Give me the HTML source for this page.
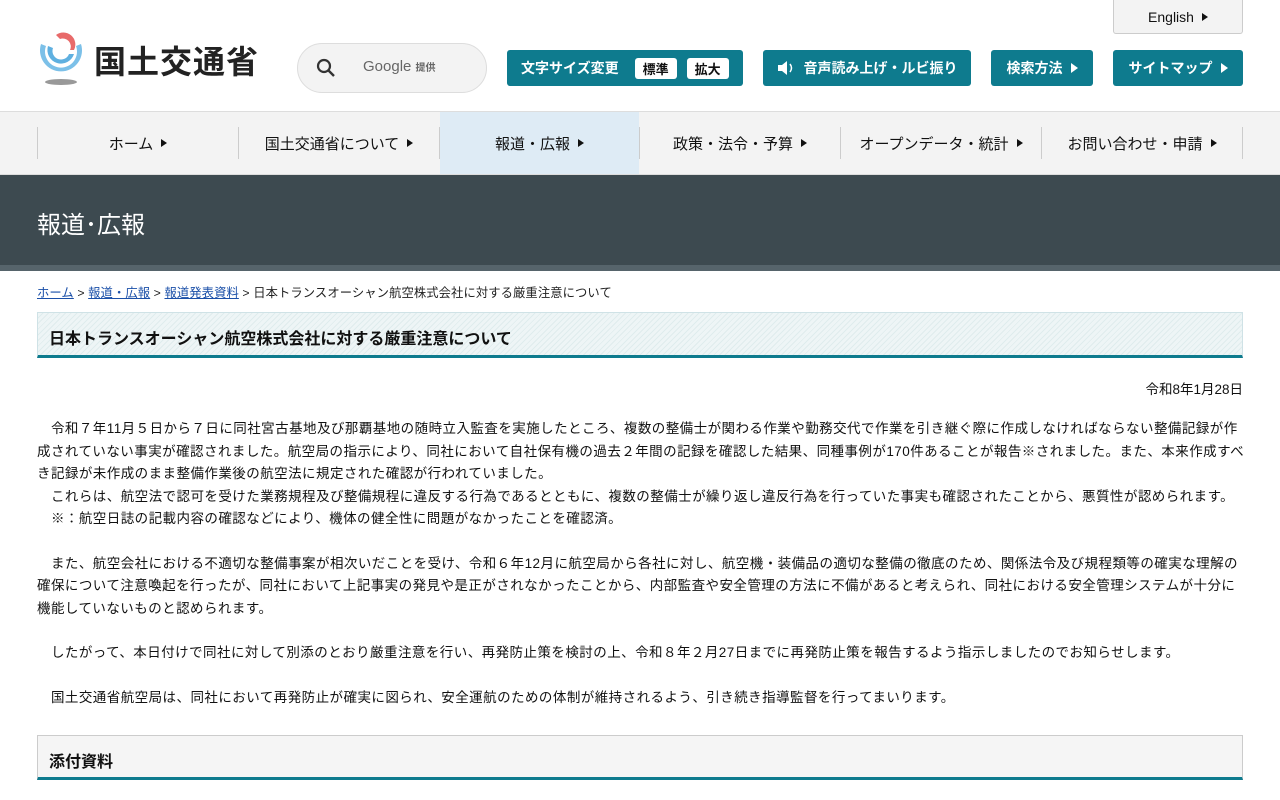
<!DOCTYPE html>
<html lang="ja"><head><meta charset="utf-8">
<style>
*{margin:0;padding:0;box-sizing:border-box}
body{width:1280px;height:800px;overflow:hidden;background:#fff;font-family:"Liberation Sans","Noto Sans CJK JP",sans-serif;color:#111}
.abs{position:absolute}
.btn{position:absolute;top:50px;height:36px;background:#0e7b8e;color:#fff;border-radius:3px;font-size:14px;font-weight:bold;display:flex;align-items:center;justify-content:center}
.tri{display:inline-block;width:0;height:0;border-left:7px solid currentColor;border-top:5px solid transparent;border-bottom:5px solid transparent;margin-left:8px}
.nav{position:absolute;top:111px;left:0;width:1280px;height:64px;background:#f3f3f3;border-top:1px solid #ddd;border-bottom:1px solid #ddd}
.nav div{position:absolute;top:0;height:62px;display:flex;align-items:center;justify-content:center;font-size:15px}
.sep{position:absolute;top:15px;width:1px;height:32px;background:#ccc}
.nav .tri{border-left-width:6px;border-top-width:4px;border-bottom-width:4px}
p{font-size:13.5px;line-height:22.5px;letter-spacing:0.45px}
</style></head><body>
<svg class="abs" style="left:36px;top:32px" width="50" height="54" viewBox="0 0 50 54">
<path d="M5 12 A21 21 0 1 0 45 12 L40 14 A16 16 0 1 1 10 14 Z" fill="#7cc0e8"/>
<path d="M12 14 A13.5 13.5 0 1 0 38 22 L33 22 A8.5 8.5 0 1 1 17 16 Z" fill="#5fb0e0"/>
<path d="M20 3 A12 12 0 0 1 38 18 L34 18 A8 8 0 0 0 24 7 Z" fill="#e86a6a"/>
<ellipse cx="25" cy="50" rx="16" ry="3" fill="#999"/>
</svg>
<div class="abs" style="left:94px;top:37px;font-size:32px;font-weight:bold;color:#222;letter-spacing:1px">国土交通省</div>
<div class="abs" style="left:297px;top:43px;width:190px;height:50px;border:1px solid #ddd;border-radius:25px;background:#f3f3f3"></div>
<svg class="abs" style="left:316px;top:58px" width="20" height="20"><circle cx="8" cy="8" r="6" fill="none" stroke="#333" stroke-width="2.2"/><line x1="12.5" y1="12.5" x2="18" y2="18" stroke="#333" stroke-width="2.4"/></svg>
<div class="abs" style="left:363px;top:58px;font-size:15px;color:#666">Google <span style="font-size:10px;font-weight:bold">提供</span></div>
<div class="abs" style="left:1113px;top:0;width:130px;height:34px;background:#f3f3f3;border:1px solid #ccc;border-top:none;border-radius:0 0 3px 3px;display:flex;align-items:center;justify-content:center;font-size:14px">English<span class="tri" style="border-left-width:6px;border-top-width:4px;border-bottom-width:4px"></span></div>
<div class="btn" style="left:507px;width:236px;justify-content:flex-start;padding-left:14px">文字サイズ変更
<span style="background:#fff;color:#111;border-radius:3px;padding:1px 8px;margin-left:16px;font-size:13px">標準</span>
<span style="background:#fff;color:#111;border-radius:3px;padding:1px 8px;margin-left:10px;font-size:13px">拡大</span></div>
<div class="btn" style="left:763px;width:208px"><svg width="18" height="16" style="margin-right:9px"><path d="M1 5h4l5-4v14l-5-4H1z" fill="#fff"/><path d="M13 4q3 4 0 8" stroke="#fff" fill="none" stroke-width="1.5"/></svg>音声読み上げ・ルビ振り</div>
<div class="btn" style="left:991px;width:102px">検索方法<span class="tri"></span></div>
<div class="btn" style="left:1113px;width:130px">サイトマップ<span class="tri"></span></div>
<div class="nav">
<div style="left:440px;width:199px;background:#deebf5"></div>
<div style="left:38px;width:200px">ホーム<span class="tri"></span></div>
<div style="left:239px;width:200px">国土交通省について<span class="tri"></span></div>
<div style="left:440px;width:199px">報道・広報<span class="tri"></span></div>
<div style="left:640px;width:200px">政策・法令・予算<span class="tri"></span></div>
<div style="left:841px;width:200px">オープンデータ・統計<span class="tri"></span></div>
<div style="left:1042px;width:200px">お問い合わせ・申請<span class="tri"></span></div>
<span class="sep" style="left:37px"></span><span class="sep" style="left:238px"></span><span class="sep" style="left:439px"></span><span class="sep" style="left:639px"></span><span class="sep" style="left:840px"></span><span class="sep" style="left:1041px"></span><span class="sep" style="left:1242px"></span>
</div>
<div class="abs" style="left:0;top:175px;width:1280px;height:90px;background:#3d4a50"></div>
<div class="abs" style="left:0;top:265px;width:1280px;height:6px;background:#56646b"></div>
<div class="abs" style="left:37px;top:205px;font-size:24px;color:#fff">報道･広報</div>
<div class="abs" style="left:37px;top:283px;font-size:12.3px;color:#222;letter-spacing:0.1px"><u style="color:#1a4fa8">ホーム</u> &gt; <u style="color:#1a4fa8">報道・広報</u> &gt; <u style="color:#1a4fa8">報道発表資料</u> &gt; 日本トランスオーシャン航空株式会社に対する厳重注意について</div>
<div class="abs" style="left:37px;top:312px;width:1206px;height:46px;border:1px solid #cfe2e6;border-bottom:3px solid #0e7b8e;background:repeating-linear-gradient(135deg,#eef5f6 0 3px,#dfeced 3px 4px);font-size:16px;font-weight:bold;padding:12px 0 0 11px">日本トランスオーシャン航空株式会社に対する厳重注意について</div>
<div class="abs" style="left:1000px;top:378px;width:243px;text-align:right;font-size:13.5px">令和8年1月28日</div>
<div class="abs" style="left:37px;top:418px;width:1208px">
<p>　令和７年11月５日から７日に同社宮古基地及び那覇基地の随時立入監査を実施したところ、複数の整備士が関わる作業や勤務交代で作業を引き継ぐ際に作成しなければならない整備記録が作成されていない事実が確認されました。航空局の指示により、同社において自社保有機の過去２年間の記録を確認した結果、同種事例が170件あることが報告※されました。また、本来作成すべき記録が未作成のまま整備作業後の航空法に規定された確認が行われていました。<br>
　これらは、航空法で認可を受けた業務規程及び整備規程に違反する行為であるとともに、複数の整備士が繰り返し違反行為を行っていた事実も確認されたことから、悪質性が認められます。<br>
　※：航空日誌の記載内容の確認などにより、機体の健全性に問題がなかったことを確認済。</p>
<p style="margin-top:22px">　また、航空会社における不適切な整備事案が相次いだことを受け、令和６年12月に航空局から各社に対し、航空機・装備品の適切な整備の徹底のため、関係法令及び規程類等の確実な理解の確保について注意喚起を行ったが、同社において上記事実の発見や是正がされなかったことから、内部監査や安全管理の方法に不備があると考えられ、同社における安全管理システムが十分に機能していないものと認められます。</p>
<p style="margin-top:22px">　したがって、本日付けで同社に対して別添のとおり厳重注意を行い、再発防止策を検討の上、令和８年２月27日までに再発防止策を報告するよう指示しましたのでお知らせします。</p>
<p style="margin-top:22px">　国土交通省航空局は、同社において再発防止が確実に図られ、安全運航のための体制が維持されるよう、引き続き指導監督を行ってまいります。</p>
</div>
<div class="abs" style="left:37px;top:735px;width:1206px;height:45px;border:1px solid #ccc;border-bottom:3px solid #0e7b8e;background:#f5f5f5;font-size:16px;font-weight:bold;padding:12px 0 0 11px">添付資料</div>
</body></html>
